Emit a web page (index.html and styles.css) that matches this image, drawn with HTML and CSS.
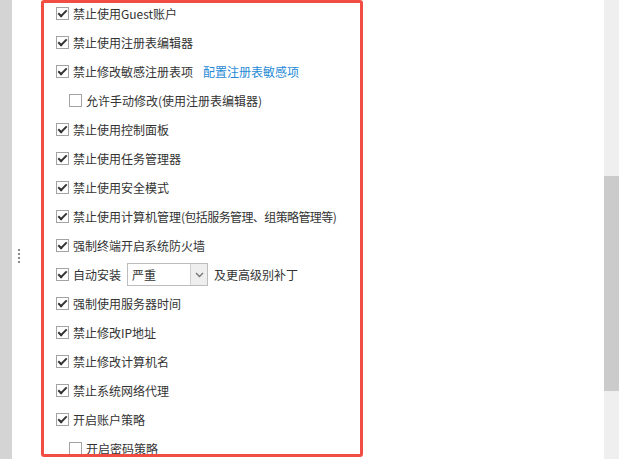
FILE: index.html
```html
<!DOCTYPE html>
<html lang="zh-CN">
<head>
<meta charset="utf-8">
<title>策略设置</title>
<link rel="stylesheet" href="styles.css">
</head>
<body>
<div class="app">
  <div class="sidebar"></div>
  <div class="gutter">
    <div class="grip"><span></span><span></span><span></span><span></span></div>
  </div>
  <div class="panel">
    <ul class="list">
      <li class="row"><span class="cb on"></span><span class="label">禁止使用Guest账户</span></li>
      <li class="row"><span class="cb on"></span><span class="label">禁止使用注册表编辑器</span></li>
      <li class="row"><span class="cb on"></span><span class="label">禁止修改敏感注册表项</span><a class="link">配置注册表敏感项</a></li>
      <li class="row sub"><span class="cb"></span><span class="label">允许手动修改(使用注册表编辑器)</span></li>
      <li class="row"><span class="cb on"></span><span class="label">禁止使用控制面板</span></li>
      <li class="row"><span class="cb on"></span><span class="label">禁止使用任务管理器</span></li>
      <li class="row"><span class="cb on"></span><span class="label">禁止使用安全模式</span></li>
      <li class="row"><span class="cb on"></span><span class="label">禁止使用计算机管理<span class="tight">(包括服务管理、组策略管理等)</span></span></li>
      <li class="row"><span class="cb on"></span><span class="label">强制终端开启系统防火墙</span></li>
      <li class="row"><span class="cb on"></span><span class="label">自动安装</span>
        <span class="select"><span class="value">严重</span><span class="arrow"><svg width="9" height="6" viewBox="0 0 9 6"><path d="M1 1l3.5 3.5L8 1" fill="none" stroke="#777" stroke-width="1.4"/></svg></span></span>
        <span class="label">及更高级别补丁</span></li>
      <li class="row"><span class="cb on"></span><span class="label">强制使用服务器时间</span></li>
      <li class="row"><span class="cb on"></span><span class="label">禁止修改IP地址</span></li>
      <li class="row"><span class="cb on"></span><span class="label">禁止修改计算机名</span></li>
      <li class="row"><span class="cb on"></span><span class="label">禁止系统网络代理</span></li>
      <li class="row"><span class="cb on"></span><span class="label">开启账户策略</span></li>
      <li class="row sub"><span class="cb"></span><span class="label">开启密码策略</span></li>
    </ul>
  </div>
  <div class="spacer"></div>
  <div class="scrollbar"><div class="thumb"></div></div>
</div>
</body>
</html>
```
FILE: styles.css
```css
html, body {
  margin: 0;
  padding: 0;
  background: #fff;
  height: 459px;
  overflow: hidden;
}
body {
  font-family: "Noto Sans CJK SC", "Noto Sans", sans-serif;
  font-size: 12px;
  color: #333;
}
.app {
  display: flex;
  height: 459px;
}
.sidebar {
  width: 12px;
  flex: none;
  background: #d4d4d4;
}
.gutter {
  width: 29px;
  flex: none;
  padding: 249px 0 0 6px;
  box-sizing: border-box;
}
.grip {
  display: flex;
  flex-direction: column;
  gap: 2px;
}
.grip span {
  width: 2px;
  height: 2px;
  background: #8a8a8a;
}
.panel {
  width: 322px;
  height: 457px;
  flex: none;
  box-sizing: border-box;
  border: 3px solid #f24d43;
  border-radius: 3px;
  overflow: hidden;
}
.list {
  list-style: none;
  margin: -4px 0 0 0;
  padding: 0 0 0 12px;
}
.row {
  height: 29px;
  display: flex;
  align-items: center;
  white-space: nowrap;
}
.row.sub {
  padding-left: 13px;
}
.tight {
  letter-spacing: -0.6px;
}
.cb {
  width: 13px;
  height: 13px;
  box-sizing: border-box;
  border: 1px solid #a3a3a3;
  background: #fff;
  margin-right: 4px;
  flex: none;
  position: relative;
}
.cb.on::after {
  content: "";
  position: absolute;
  left: 3px;
  top: 0px;
  width: 3px;
  height: 7px;
  border: solid #333;
  border-width: 0 2px 2px 0;
  transform: rotate(45deg);
}
.link {
  color: #1f8ad6;
  margin-left: 10px;
  cursor: pointer;
}
.select {
  display: flex;
  width: 81px;
  height: 23px;
  box-sizing: border-box;
  border: 1px solid #bdbdbd;
  margin: 0 6px 0 6px;
  background: #fff;
}
.select .value {
  flex: 1;
  padding-left: 4px;
  line-height: 21px;
  color: #333;
}
.select .arrow {
  width: 16px;
  border-left: 1px solid #d0d0d0;
  background: #eeeeee;
  display: flex;
  align-items: center;
  justify-content: center;
}
.spacer {
  flex: 1;
}
.scrollbar {
  width: 15px;
  flex: none;
  background: #efefef;
  padding-top: 176px;
  box-sizing: border-box;
}
.thumb {
  height: 215px;
  background: #cbcbcb;
}
```
